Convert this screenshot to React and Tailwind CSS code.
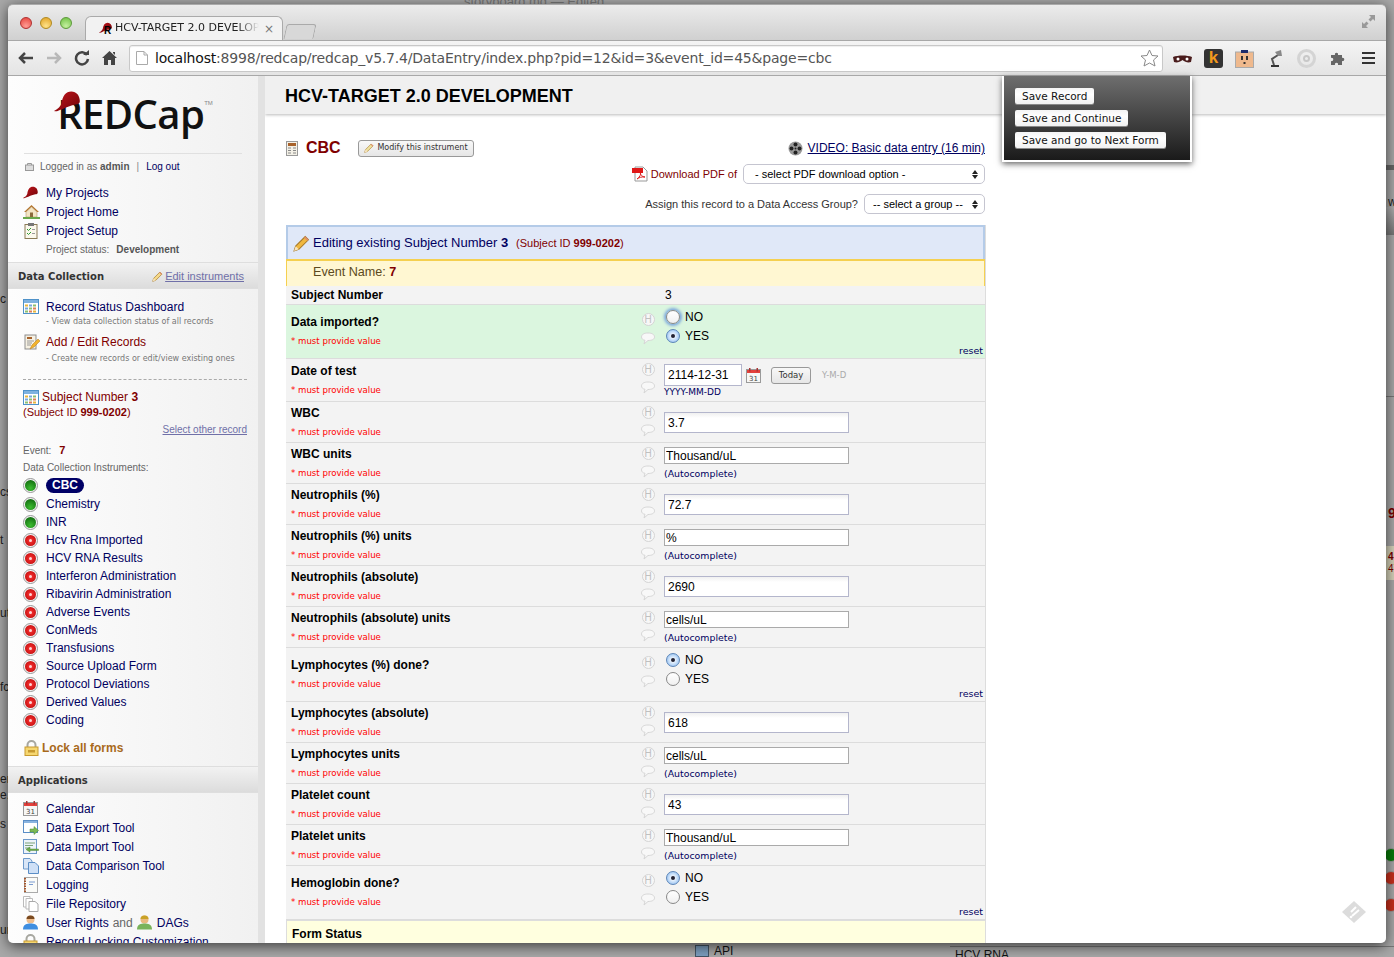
import React from "react";

const arial = "font-['Liberation_Sans',Arial,sans-serif]";
const lucida = "font-['DejaVu_Sans',sans-serif]";

function Cap({ size = 22, className = "" }) {
  return (
    <svg width={size} height={size * 0.8} viewBox="0 0 26 20" className={className}>
      <defs>
        <linearGradient id="capg" x1="0" y1="0" x2="1" y2="1">
          <stop offset="0" stopColor="#c4141c" />
          <stop offset="1" stopColor="#6e0508" />
        </linearGradient>
      </defs>
      <path d="M0 19 C4 17 6 15 7 12 C8 5 11 1 16 1 C21 1 24 5 24 10 C24 12 22 13 20 13 C14 14 9 17 6 18 C4 19 2 20 0 19 Z" fill="url(#capg)" />
    </svg>
  );
}

function HomeI() {
  return (
    <svg width="17" height="15" viewBox="0 0 17 15">
      <path d="M1 8 L8.5 1 L16 8 L14 8 L8.5 3 L3 8Z" fill="#b5762e" />
      <path d="M3 8 L8.5 3 L14 8 V13 H3Z" fill="#f3e5c4" stroke="#a98b5f" strokeWidth=".5" />
      <rect x="7" y="8.5" width="3" height="4.5" fill="#8a6a3a" />
      <rect x="0" y="13" width="17" height="2" fill="#69a84a" />
    </svg>
  );
}
function ClipI() {
  return (
    <svg width="14" height="16" viewBox="0 0 14 16">
      <rect x="1" y="1.5" width="12" height="14" fill="#fbf8ec" stroke="#8b7b56" />
      <rect x="4" y="0" width="6" height="3" fill="#777" />
      <path d="M3 6 l1.5 1.5 L7 5 M3 10 l1.5 1.5 L7 9" stroke="#2c9a32" fill="none" />
      <path d="M8 6.5h3M8 10.5h3" stroke="#999" />
    </svg>
  );
}
function GridI() {
  return (
    <svg width="16" height="15" viewBox="0 0 16 15">
      <rect x=".5" y=".5" width="15" height="14" fill="#fff" stroke="#4f92c9" />
      <rect x="1" y="1" width="14" height="3" fill="#7fb2df" />
      {[2, 6, 10].map((x, i) => [5.5, 8.5, 11.5].map((y, j) => (
        <rect key={x + "-" + y} x={x} y={y} width="3" height="2" fill={["#e8b53c", "#7aa7dc", "#8dc070", "#dd7f5a"][(i + j) % 4]} />
      )))}
    </svg>
  );
}
function NoteI() {
  return (
    <svg width="16" height="16" viewBox="0 0 16 16">
      <rect x="1" y="1" width="11" height="14" fill="#f6f1e3" stroke="#8d8d8d" />
      <rect x="3" y="3" width="5" height="2" fill="#a8622b" />
      <path d="M3 7h7M3 9h5M3 11h4" stroke="#999" />
      <path d="M6 15 L8 11 L14 5 L16 7 L10 13Z" fill="#f2b32c" stroke="#b5781c" strokeWidth=".5" />
    </svg>
  );
}
function Pencil({ size = 12, color = "#f0b840" }) {
  return (
    <svg width={size} height={size} viewBox="0 0 16 16">
      <path d="M1 15 L2.5 10.5 L11.5 1.5 L14.5 4.5 L5.5 13.5Z" fill={color} stroke="#a87a28" strokeWidth="1" />
      <path d="M1 15 L2.5 10.5 L5.5 13.5Z" fill="#f7e4c0" />
      <path d="M11.5 1.5 L14.5 4.5 L13.5 5.5 L10.5 2.5Z" fill="#e08a70" />
    </svg>
  );
}
function Status({ on }) {
  const c = on ? "bg-[radial-gradient(circle_at_50%_75%,#3cbc30,#0a5e0a)]" : "bg-[radial-gradient(circle_at_50%_50%,#f33,#b40808)]";
  return (
    <span className="flex h-[15px] w-[15px] shrink-0 items-center justify-center rounded-full border border-[#999] bg-[#f4f4f4]">
      <span className={`flex h-[11px] w-[11px] items-center justify-center rounded-full ${c}`}>
        {!on && <span className="h-[3px] w-[3px] rounded-full bg-white/80" />}
      </span>
    </span>
  );
}
function LockI() {
  return (
    <svg width="15" height="16" viewBox="0 0 15 16">
      <path d="M3.5 8 V5 a4 4 0 0 1 8 0 V8" fill="none" stroke="#a7a7a0" strokeWidth="2" />
      <rect x="1" y="7" width="13" height="8.5" fill="#f6d770" stroke="#c79a30" />
      <rect x="4" y="10" width="7" height="2.5" fill="#c79a30" />
    </svg>
  );
}
function CalI({ size = 15 }) {
  return (
    <svg width={size} height={size} viewBox="0 0 15 15">
      <rect x=".5" y="1.5" width="14" height="13" fill="#f7f7f5" stroke="#9a9a9a" />
      <rect x="1" y="2" width="13" height="3" fill="#e2413c" />
      <rect x="3" y="0" width="1.5" height="3.5" fill="#a33" />
      <rect x="10.5" y="0" width="1.5" height="3.5" fill="#a33" />
      <text x="7.5" y="12.5" fontSize="7" textAnchor="middle" fill="#444" fontFamily="DejaVu Sans">31</text>
    </svg>
  );
}
function AppIcon({ kind }) {
  if (kind === "cal") return <CalI />;
  if (kind === "export")
    return (
      <svg width="16" height="15" viewBox="0 0 16 15">
        <rect x=".5" y=".5" width="14" height="12" fill="#fff" stroke="#5b8ec6" />
        <rect x="1" y="1" width="13" height="2" fill="#8ab4e0" />
        <path d="M7 9 h4 V6.5 L15.5 10.5 L11 14.5 V12 H7Z" fill="#7cb956" stroke="#4d8a2e" strokeWidth=".5" />
      </svg>
    );
  if (kind === "import")
    return (
      <svg width="16" height="15" viewBox="0 0 16 15">
        <rect x=".5" y=".5" width="13" height="14" fill="#edf3fa" stroke="#6e9acb" />
        <path d="M2 4h10M2 6.5h8M2 9h4" stroke="#7da37a" />
        <path d="M15.5 10 H7 V8 L3 10.5 L7 13 V11.5 H15.5Z" fill="#6fae4c" stroke="#3f7b26" strokeWidth=".4" />
      </svg>
    );
  if (kind === "compare")
    return (
      <svg width="16" height="16" viewBox="0 0 16 16">
        <path d="M.5.5 H7 L9 3 V11 H.5Z" fill="#d9e6f7" stroke="#6e9acb" />
        <path d="M5.5 4.5 H12 L15.5 8 V15.5 H5.5Z" fill="#cfe0f6" stroke="#5b8ec6" />
      </svg>
    );
  if (kind === "log")
    return (
      <svg width="15" height="16" viewBox="0 0 15 16">
        <rect x="1.5" y=".5" width="13" height="15" fill="#fbfbf8" stroke="#aaa" />
        <path d="M2 1v14" stroke="#a4562c" strokeWidth="2" strokeDasharray="1.5 1" />
        <path d="M6 5h6M6 7.5h4" stroke="#7a9bd0" />
      </svg>
    );
  if (kind === "files")
    return (
      <svg width="16" height="16" viewBox="0 0 16 16">
        <path d="M.5.5 H7 V11 H.5Z" fill="#fff" stroke="#bbb" />
        <path d="M3 2.5 H9.5 V13 H3Z" fill="#fff" stroke="#bbb" />
        <path d="M6 5.5 H12 L15 8 V15.5 H6Z" fill="#fff" stroke="#aaa" />
      </svg>
    );
  return <User />;
}
function User({ alt }) {
  return (
    <svg width="15" height="15" viewBox="0 0 15 15">
      <circle cx="7.5" cy="4.5" r="4" fill={alt ? "#e9b97e" : "#efbd8c"} />
      <path d="M3.5 4 A4 3.5 0 0 1 11.5 4Z" fill={alt ? "#c9a227" : "#7a4a20"} />
      <path d="M0 14.5 C0 9 4 8.5 7.5 8.5 C11 8.5 15 9 15 14.5Z" fill={alt ? "#79b35a" : "#3f8ee0"} />
    </svg>
  );
}
function HBubble({ radio }) {
  return (
    <div className={`flex w-[16px] flex-col items-center ${radio ? "pt-[8px]" : "pt-[4px]"}`}>
      <span className={`flex h-[13px] w-[13px] items-center justify-center rounded-full border border-[#d4d4d4] bg-[#f7f7f7] text-[10px] leading-none text-[#c0c0c0] ${arial}`}>H</span>
      <svg width="14" height="13" viewBox="0 0 14 13" className={radio ? "mt-[6px]" : "mt-[5px]"}>
        <path d="M7 1 C11 1 13.5 2.5 13.5 5 C13.5 7.5 10.5 8.5 7 8.5 L3 12 L4 8.3 C2 8 .5 6.8 .5 5 C.5 2.5 3 1 7 1Z" fill="#f8f8f8" stroke="#d6d6d6" />
      </svg>
    </div>
  );
}
function Radio({ checked, focus }) {
  return (
    <span className={`flex h-[14px] w-[14px] items-center justify-center rounded-full border ${checked ? "border-[#5d86b8] bg-[radial-gradient(circle,#ffffff_10%,#a9cdf5_70%,#77a8e3)]" : "border-[#888] bg-[linear-gradient(#fff,#f0f0f0)]"} ${focus ? "border-[#5d8fd0] shadow-[0_0_3px_2px_#7ba6dc]" : ""}`}>
      {checked && <span className="h-[4px] w-[4px] rounded-full bg-[#223]" />}
    </span>
  );
}
function Label({ text, radio, date }) {
  return (
    <div className={`w-[354px] shrink-0 pl-[5px] ${radio ? "pt-[10px]" : date ? "pt-[5px]" : "pt-[4px]"}`}>
      <div className="text-[12px] font-bold leading-[15px] text-black">{text}</div>
      <div className={`mt-[5px] text-[8.6px] leading-[12px] text-[#f00] ${lucida}`}>* must provide value</div>
    </div>
  );
}

function TextRow({ label, value }) {
  return (
    <div className="flex h-[41px] border-b border-[#dcdcdc] bg-[#f3f3f3]">
      <Label text={label} />
      <HBubble />
      <div className="pl-[8px] pt-[10px]">
        <input readOnly value={value} className={`block h-[21px] w-[185px] border border-[#b4b6cc] bg-[linear-gradient(#f0f0f0,#fff_5px)] px-[3px] text-[12px] text-black outline-none ${arial}`} />
      </div>
    </div>
  );
}
function AutoRow({ label, value }) {
  return (
    <div className="flex h-[41px] border-b border-[#dcdcdc] bg-[#f3f3f3]">
      <Label text={label} />
      <HBubble />
      <div className="pl-[8px] pt-[4px]">
        <input readOnly value={value} className={`block h-[17px] w-[185px] border border-[#aaa] bg-white px-[1px] text-[12px] text-black outline-none ${arial}`} />
        <div className={`mt-[4px] text-[9.4px] leading-[12px] text-[#000060] ${lucida}`}>(Autocomplete)</div>
      </div>
    </div>
  );
}
function RadioRow({ label, first, bg = "bg-[#f3f3f3]", focus }) {
  return (
    <div className={`flex h-[54px] border-b border-[#dcdcdc] ${bg}`}>
      <Label text={label} radio />
      <HBubble radio />
      <div className="flex-1 pl-[10px] pt-[2px]">
        <div className="flex h-[19px] items-center gap-[5px] text-[12px] text-black">
          <Radio checked={first} focus={focus} />NO
        </div>
        <div className="flex h-[19px] items-center gap-[5px] text-[12px] text-black">
          <Radio checked={!first} />YES
        </div>
        <div className={`pr-[2px] text-right text-[9.5px] leading-[11px] text-[#000060] ${lucida}`}>reset</div>
      </div>
    </div>
  );
}

function Select({ width, text, pad }) {
  return (
    <div className={`flex h-[20px] ${width} ${pad} items-center justify-between rounded-[5px] border border-[#c5c5d0] bg-white pr-[6px] text-[11px] text-black`}>
      <span>{text}</span>
      <span className="flex flex-col gap-[1px]">
        <span className="h-0 w-0 border-x-[3px] border-b-[4px] border-x-transparent border-b-[#222]" />
        <span className="h-0 w-0 border-x-[3px] border-t-[4px] border-x-transparent border-t-[#222]" />
      </span>
    </div>
  );
}

function SideHeader({ children, right }) {
  return (
    <div className="flex h-[27px] items-center justify-between border-y border-[#dedede] bg-[linear-gradient(#f2f2f2,#dcdcdc)] pl-[10px] pr-[14px] pt-[1px] font-bold text-[#333]">
      <span className={lucida + " text-[10px]"}>{children}</span>
      {right}
    </div>
  );
}

const instruments = [
  ["Chemistry", true], ["INR", true], ["Hcv Rna Imported", false], ["HCV RNA Results", false],
  ["Interferon Administration", false], ["Ribavirin Administration", false], ["Adverse Events", false],
  ["ConMeds", false], ["Transfusions", false], ["Source Upload Form", false], ["Protocol Deviations", false],
  ["Derived Values", false], ["Coding", false],
];
const apps = [
  ["cal", "Calendar"], ["export", "Data Export Tool"], ["import", "Data Import Tool"],
  ["compare", "Data Comparison Tool"], ["log", "Logging"], ["files", "File Repository"],
];

function Sidebar() {
  return (
    <aside className="w-[250px] shrink-0 overflow-hidden bg-[linear-gradient(90deg,#fdfdfd,#f1f1f1)] text-[12px] text-[#000060]">
      <div className="flex h-[77px] items-start justify-center pl-[4px] pt-[11px]">
        <div className="relative flex items-start">
          <Cap size={28} className="absolute -left-[3px] top-[3px] z-10" />
          <span className="text-[40px] font-semibold leading-[54px] tracking-[-0.6px] text-[#111] [font-family:'Open_Sans','Lato',sans-serif]">REDCap</span>
          <span className="mt-[12px] text-[6px] text-[#888]">TM</span>
        </div>
      </div>
      <div className="mx-[16px] border-t border-[#e0e0e0]" />
      <div className="flex h-[25px] items-center pl-[17px] text-[10px] text-[#666]">
        <svg width="9" height="9" viewBox="0 0 9 9" className="mr-[6px]"><rect x=".5" y="3" width="8" height="5.5" fill="#ddd" stroke="#999" /><path d="M2.5 3V1.5h4V3" fill="none" stroke="#999" /></svg>
        <span>Logged in as <b className="text-[#555]">admin</b></span>
        <span className="mx-[7px] text-[#888]">|</span>
        <span className="text-[#000060]">Log out</span>
      </div>
      <div className="pl-[15px] pt-[4px]">
        <div className="flex h-[19px] items-center"><span className="flex w-[23px]"><Cap size={16} /></span>My Projects</div>
        <div className="flex h-[19px] items-center"><span className="flex w-[23px]"><HomeI /></span>Project Home</div>
        <div className="flex h-[19px] items-center"><span className="flex w-[23px] pl-[1px]"><ClipI /></span>Project Setup</div>
        <div className="flex h-[19px] items-center pl-[23px] text-[10px] text-[#666]">Project status:<b className="ml-[7px] text-[#555]">Development</b></div>
      </div>
      <div className="mt-[3px]">
        <SideHeader right={<span className="flex items-center gap-[2px] text-[11px] font-normal text-[#6f6fa8] underline"><Pencil size={11} color="#f5d98a" />Edit instruments</span>}>
          Data Collection
        </SideHeader>
      </div>
      <div className="px-[15px] pt-[9px]">
        <div className="flex h-[17px] items-center"><span className="flex w-[23px]"><GridI /></span>Record Status Dashboard</div>
        <div className={`mt-[1px] h-[12px] whitespace-nowrap pl-[23px] text-[8px] leading-[12px] text-[#777] ${lucida}`}>- View data collection status of all records</div>
        <div className="mt-[5px] flex h-[18px] items-center text-[#800000]"><span className="flex w-[23px] pl-[1px]"><NoteI /></span>Add / Edit Records</div>
        <div className={`mt-[2px] h-[12px] whitespace-nowrap pl-[23px] text-[8px] leading-[12px] text-[#777] ${lucida}`}>- Create new records or edit/view existing ones</div>
        <div className="mr-[-4px] mt-[14px] border-t border-dashed border-[#aaa]" />
        <div className="mt-[9px] flex h-[16px] items-center text-[#800000]">
          <span className="flex w-[19px]"><GridI /></span>Subject Number&nbsp;<b>3</b>
        </div>
        <div className="h-[15px] text-[11px] leading-[15px] text-[#800000]">(Subject ID <b>999-0202</b>)</div>
        <div className="mr-[-4px] mt-[2px] h-[15px] text-right text-[10px] leading-[15px] text-[#7070a8] underline">Select other record</div>
        <div className="mt-[6px] flex h-[14px] items-center text-[10px] text-[#666]">Event:<b className="ml-[8px] text-[11px] text-[#800000]">7</b></div>
        <div className="mt-[4px] h-[14px] text-[10px] leading-[14px] text-[#666]">Data Collection Instruments:</div>
        <div className="mt-[1px] flex h-[18px] items-center">
          <span className="flex w-[23px]"><Status on /></span>
          <span className="flex h-[15px] items-center rounded-full bg-[#000066] px-[6px] text-[12px] font-bold text-white">CBC</span>
        </div>
        <div className="pt-[1px]">
          {instruments.map(([t, on]) => (
            <div key={t} className="flex h-[18px] items-center">
              <span className="flex w-[23px]"><Status on={on} /></span>{t}
            </div>
          ))}
        </div>
        <div className="mt-[10px] flex h-[18px] items-center font-bold text-[#a86a1c]">
          <span className="flex w-[19px] pl-[1px]"><LockI /></span>Lock all forms
        </div>
      </div>
      <div className="mt-[9px]">
        <SideHeader>Applications</SideHeader>
      </div>
      <div className="pl-[15px] pt-[6px]">
        {apps.map(([k, t]) => (
          <div key={t} className="flex h-[19px] items-center"><span className="flex w-[23px]"><AppIcon kind={k} /></span>{t}</div>
        ))}
        <div className="flex h-[19px] items-center">
          <span className="flex w-[23px]"><User /></span>User Rights<span className="mx-[4px] text-[#666]">and</span>
          <span className="mr-[5px] flex"><User alt /></span>DAGs
        </div>
        <div className="flex h-[19px] items-center"><span className="flex w-[23px]"><LockI /></span>Record Locking Customization</div>
      </div>
    </aside>
  );
}

function Main() {
  return (
    <main className="relative min-w-0 flex-1 overflow-hidden bg-white">
      <div className="flex h-[38px] items-center bg-[#f0f0f0] pl-[20px] pt-[2px] shadow-[0_1px_3px_#bbb]">
        <h1 className="text-[18px] font-bold leading-none text-black">HCV-TARGET 2.0 DEVELOPMENT</h1>
      </div>
      <div className="w-[721px] pl-[21px] pt-[25px]">
        <div className="pr-[1px]">
          <div className="flex h-[18px] items-center justify-between">
            <div className="flex items-center">
              <svg width="13" height="15" viewBox="0 0 13 15" className="mr-[7px]">
                <rect x=".5" y=".5" width="11" height="14" fill="#f3f0e6" stroke="#999" />
                <rect x="2" y="2" width="8" height="3" fill="#a8622b" />
                <path d="M2 7h3M7 7h3M2 9.5h3M7 9.5h3M2 12h3M7 12h3" stroke="#888" />
              </svg>
              <span className="w-[52px] text-[16px] font-bold text-[#800000]">CBC</span>
              <span className={`flex h-[17px] w-[116px] items-center justify-center gap-[3px] rounded-[3px] border border-[#999] bg-[linear-gradient(#f8f8f8,#e6e6e6)] text-[8px] text-[#333] ${lucida}`}>
                <Pencil size={10} color="#efe3a0" />Modify this instrument
              </span>
            </div>
            <div className="flex items-center gap-[5px] text-[12px] text-[#000060]">
              <svg width="15" height="15" viewBox="0 0 15 15">
                <circle cx="7.5" cy="7.5" r="7" fill="#9a9a9a" />
                <circle cx="7.5" cy="7.5" r="1" fill="#222" />
                <circle cx="7.5" cy="3.5" r="2" fill="#222" /><circle cx="7.5" cy="11.5" r="2" fill="#222" />
                <circle cx="3.5" cy="7.5" r="2" fill="#222" /><circle cx="11.5" cy="7.5" r="2" fill="#222" />
              </svg>
              <span className="underline">VIDEO: Basic data entry (16 min)</span>
            </div>
          </div>
          <div className="mt-[7px] flex items-center justify-end text-[11px] text-[#800000]">
            <svg width="16" height="16" viewBox="0 0 16 16" className="mr-[3px]">
              <path d="M3 1 H11 L15 5 V15 H3Z" fill="#fff" stroke="#999" />
              <rect x="0" y="2" width="11" height="5" fill="#e01818" />
              <path d="M5 13 C8 11 9 8 8.5 7 C8 8 10 11 13 11 C10 10.5 7 11.5 5 13Z" fill="none" stroke="#d22" />
            </svg>
            Download PDF of
            <div className="ml-[6px]"><Select width="w-[242px]" pad="pl-[11px]" text="- select PDF download option -" /></div>
          </div>
          <div className="mt-[10px] flex items-center justify-end text-[11px] text-[#333]">
            Assign this record to a Data Access Group?
            <div className="ml-[6px]"><Select width="w-[121px]" pad="pl-[8px]" text="-- select a group --" /></div>
          </div>
        </div>
        <div className="mt-[11px] border-r border-[#ddd]">
          <div className="flex h-[34px] items-center border-2 border-b-0 border-[#b4cbe8] bg-[#e0e8f8] pl-[5px] text-[#000060]">
            <Pencil size={17} />
            <span className="ml-[3px] text-[13px]">Editing existing Subject Number <b>3</b></span>
            <span className="ml-[8px] text-[11px] text-[#800000]">(Subject ID <b>999-0202</b>)</span>
          </div>
          <div className="flex h-[27px] items-center border-x border-t-2 border-[#f5d050] bg-[#fff7d2] pb-[2px] pl-[26px] text-[12.6px] text-[#5c4a20]">
            Event Name:&nbsp;<b className="text-[#800000]">7</b>
          </div>
          <div className="flex h-[19px] items-center border-b border-[#dcdcdc] bg-[#f3f3f3] text-[12px]">
            <span className="w-[379px] pl-[5px] font-bold text-black">Subject Number</span><span>3</span>
          </div>
          <RadioRow label="Data imported?" first={false} bg="bg-[#dbf6df]" focus />
          <div className="flex h-[43px] border-b border-[#dcdcdc] bg-[#f3f3f3]">
            <Label text="Date of test" date />
            <HBubble />
            <div className="pl-[8px] pt-[5px]">
              <div className="flex items-center">
                <input readOnly value="2114-12-31" className={`block h-[22px] w-[78px] border border-[#b4b6cc] bg-white px-[3px] text-[12px] text-black outline-none ${arial}`} />
                <span className="ml-[4px] flex"><CalI size={15} /></span>
                <span className={`ml-[10px] flex h-[17px] w-[40px] items-center justify-center rounded-[3px] border border-[#999] bg-[linear-gradient(#f8f8f8,#e6e6e6)] text-[8.5px] text-[#333] ${lucida}`}>Today</span>
                <span className={`ml-[11px] text-[8.5px] text-[#aaa] ${lucida}`}>Y-M-D</span>
              </div>
              <div className={`text-[9px] leading-[12px] text-[#000060] ${lucida}`}>YYYY-MM-DD</div>
            </div>
          </div>
          <TextRow label="WBC" value="3.7" />
          <AutoRow label="WBC units" value="Thousand/uL" />
          <TextRow label="Neutrophils (%)" value="72.7" />
          <AutoRow label="Neutrophils (%) units" value="%" />
          <TextRow label="Neutrophils (absolute)" value="2690" />
          <AutoRow label="Neutrophils (absolute) units" value="cells/uL" />
          <RadioRow label="Lymphocytes (%) done?" first />
          <TextRow label="Lymphocytes (absolute)" value="618" />
          <AutoRow label="Lymphocytes units" value="cells/uL" />
          <TextRow label="Platelet count" value="43" />
          <AutoRow label="Platelet units" value="Thousand/uL" />
          <RadioRow label="Hemoglobin done?" first />
          <div className="h-[26px] border-l border-t border-[#ddd] bg-[#ffffdf] pl-[5px] pt-[6px] text-[12px] font-bold leading-[15px] text-black">Form Status</div>
        </div>
      </div>
      <svg width="24" height="22" viewBox="0 0 24 22" className="absolute bottom-[20px] right-[20px]">
        <path d="M12 0 L24 11 L12 22 L0 11Z" fill="#dcdcdc" />
        <path d="M9 11 L14 6 M10 15 L17 9" stroke="#fff" strokeWidth="2" />
        <circle cx="9" cy="16" r="1.3" fill="#fff" />
      </svg>
    </main>
  );
}

function ToolIcon({ children }) {
  return <span className="flex h-[20px] w-[31px] items-center justify-center">{children}</span>;
}

function Chrome() {
  return (
    <div className="shrink-0">
      <div className="flex h-[36px] items-end justify-between rounded-t-[5px] border-t border-[#aaa] bg-[linear-gradient(#ececec,#d0d0d0)]">
        <div className="flex h-full items-end">
          <div className="flex h-full items-center gap-[8px] self-start pl-[12px]">
            <span className="h-[12px] w-[12px] rounded-full border border-[#b03030] bg-[radial-gradient(circle_at_50%_80%,#ff9d95,#e5413a)]" />
            <span className="h-[12px] w-[12px] rounded-full border border-[#b08a20] bg-[radial-gradient(circle_at_50%_80%,#ffe38a,#e0a020)]" />
            <span className="h-[12px] w-[12px] rounded-full border border-[#5d9a3a] bg-[radial-gradient(circle_at_50%_80%,#c5f0a0,#6cc040)]" />
          </div>
          <div className={`ml-[13px] flex h-[24px] w-[198px] items-center overflow-hidden rounded-t-[6px] border border-b-0 border-[#aaa] bg-[#f2f2f2] pl-[13px] pr-[8px] text-[11px] text-[#222] ${lucida}`}>
            <span className="relative flex h-[14px] w-[16px] shrink-0 items-start">
              <Cap size={14} />
              <span className={`absolute left-[5px] top-[4px] z-10 text-[10px] font-bold leading-[10px] text-black ${arial}`}>R</span>
            </span>
            <span className="flex-1 overflow-hidden whitespace-nowrap [mask-image:linear-gradient(90deg,#000_85%,transparent)]">HCV-TARGET 2.0 DEVELOPMENT</span>
            <span className="ml-[5px] text-[12px] text-[#777]">×</span>
          </div>
          <div className="mb-[1px] ml-[2px] h-[15px] w-[30px] -skew-x-12 rounded-t-[3px] border border-b-0 border-[#aaa] bg-[#d8d8d8]" />
        </div>
        <svg width="15" height="15" viewBox="0 0 15 15" className="mb-[11px] mr-[10px]" fill="#999">
          <path d="M8 1 H14 V7 L12 5 L9.5 7.5 L7.5 5.5 L10 3Z M1 14 V8 L3 10 L5.5 7.5 L7.5 9.5 L5 12 L7 14Z" />
        </svg>
      </div>
      <div className="flex h-[36px] items-center border-y border-[#a8a8a8] bg-[linear-gradient(#f4f4f4,#e4e4e4)] pl-[9px]">
        <div className="flex w-[112px] shrink-0 items-center text-[#444]">
          <svg width="17" height="14" viewBox="0 0 17 14" className="mr-[12px]"><path d="M16 7H4M8 2 L3 7 L8 12" fill="none" stroke="#444" strokeWidth="2.5" /></svg>
          <svg width="17" height="14" viewBox="0 0 17 14" className="mr-[11px]"><path d="M1 7H13M9 2 L14 7 L9 12" fill="none" stroke="#b8b8b8" strokeWidth="2.5" /></svg>
          <svg width="16" height="16" viewBox="0 0 16 16" className="mr-[12px]"><path d="M13 5 A6 6 0 1 0 14 9" fill="none" stroke="#444" strokeWidth="2.5" /><path d="M9 5 H15 V0Z" fill="#444" /></svg>
          <svg width="15" height="14" viewBox="0 0 15 14"><path d="M7.5 0 L15 7 H13 V14 H9 V9 H6 V14 H2 V7 H0Z M11 1 H13 V4 L11 2Z" fill="#444" /></svg>
        </div>
        <div className={`flex h-[27px] w-[1034px] shrink-0 items-center rounded-[3px] border border-[#c8c8c8] bg-white pl-[6px] pr-[3px] text-[14px] tracking-[-0.2px] text-[#555] shadow-[inset_0_1px_1px_#eee] ${lucida}`}>
          <svg width="12" height="14" viewBox="0 0 12 14" className="mr-[7px] shrink-0"><path d="M.5.5 H8 L11.5 4 V13.5 H.5Z" fill="#fff" stroke="#aaa" /><path d="M8 .5 V4 H11.5" fill="none" stroke="#aaa" /></svg>
          <span className="text-[#111]">localhost</span>:8998/redcap/redcap_v5.7.4/DataEntry/index.php?pid=12&amp;id=3&amp;event_id=45&amp;page=cbc
          <svg width="19" height="18" viewBox="0 0 19 18" className="ml-auto shrink-0"><path d="M9.5 1 L12 6.5 L18 7 L13.5 11 L15 17 L9.5 14 L4 17 L5.5 11 L1 7 L7 6.5Z" fill="#fff" stroke="#888" /></svg>
        </div>
        <div className="ml-[4px] flex items-center">
          <ToolIcon>
            <svg width="19" height="15" viewBox="0 0 19 15"><path d="M6 1h7l3 3v10H3V4Z" fill="#eee" /><path d="M0 6 C5 4 14 4 19 6 L18 11 C15 12 12 11 9.5 9 C7 11 4 12 1 11Z" fill="#4a1c1c" /><circle cx="5" cy="8" r="1.5" fill="#fff" /><circle cx="14" cy="8" r="1.5" fill="#fff" /></svg>
          </ToolIcon>
          <ToolIcon><span className={`flex h-[19px] w-[19px] items-center justify-center rounded-[3px] bg-[#333] text-[17px] font-bold text-[#f29a1d] ${arial}`}>k</span></ToolIcon>
          <ToolIcon>
            <svg width="19" height="19" viewBox="0 0 19 19"><rect x=".5" y="3" width="18" height="15.5" fill="#efb98d" stroke="#aaa" /><rect x="6" y="1" width="7" height="3" fill="#1b2b6b" /><rect x="6" y="7" width="2" height="4" fill="#333" /><rect x="11" y="7" width="2" height="4" fill="#333" /><rect x="8.5" y="13" width="2" height="2" fill="#333" /></svg>
          </ToolIcon>
          <ToolIcon>
            <svg width="14" height="19" viewBox="0 0 14 19"><path d="M2 18 H10 V16 H2Z" fill="#333" /><path d="M5 16 L3 10 L9 6" fill="none" stroke="#555" strokeWidth="2" /><path d="M6 3 L12 1 L13 7 L9 7Z" fill="#888" /></svg>
          </ToolIcon>
          <ToolIcon><span className="flex h-[19px] w-[19px] items-center justify-center rounded-full border-[3px] border-[#d4d4d4]"><span className="h-[7px] w-[7px] rounded-full border-2 border-[#c8c8c8]" /></span></ToolIcon>
          <ToolIcon>
            <svg width="15" height="15" viewBox="0 0 15 15"><path d="M1 4 H5 C4 1 9 1 8 4 H12 V7 C15 6 15 11 12 10 V14 H8 C9 11 4 11 5 14 H1 V10 C4 11 4 6 1 7Z" fill="#666" /></svg>
          </ToolIcon>
          <span className="ml-[9px] flex w-[13px] flex-col gap-[2.5px]">
            <span className="h-[2.5px] bg-[#333]" /><span className="h-[2.5px] bg-[#333]" /><span className="h-[2.5px] bg-[#333]" />
          </span>
        </div>
      </div>
    </div>
  );
}

function SaveBox() {
  const Btn = ({ children }) => (
    <span className={`block w-fit rounded-[2px] bg-[linear-gradient(#f4f4f4,#fff_40%,#f0f0f0)] px-[7px] text-[10.5px] leading-[16px] text-[#111] shadow-[0_1px_0_#888] ${lucida}`}>{children}</span>
  );
  return (
    <div className="absolute left-[994px] top-0 z-20 flex h-[86px] w-[190px] flex-col gap-[6px] border-x-2 border-b-2 border-white bg-[linear-gradient(#6e6e6e,#1a1a1a)] pl-[11px] pt-[12px] shadow-[0_2px_6px_#666]">
      <Btn>Save Record</Btn>
      <Btn>Save and Continue</Btn>
      <Btn>Save and go to Next Form</Btn>
    </div>
  );
}

const leftPeek = [
  ["c", "top-[290px]"], ["cs", "top-[483px]"], ["t", "top-[531px]"], ["ut", "top-[604px]"],
  ["fc", "top-[678px]"], ["er", "top-[770px]"], ["e.", "top-[786px]"], ["s", "top-[815px]"], ["ur", "top-[921px]"],
];

function Backdrop() {
  return (
    <>
      <div className="absolute left-[464px] top-[-8px] text-[13px] text-[#777]">storyboard.md — Edited</div>
      {leftPeek.map(([t, c]) => (
        <div key={t} className={`absolute left-0 text-[12px] text-[#222] ${c}`}>{t}</div>
      ))}
      <div className="absolute left-[1386px] top-[165px] h-[5px] w-[8px] bg-[#666]" />
      <div className="absolute left-[1388px] top-[193px] text-[12px] text-[#222]">w</div>
      <div className="absolute left-[1386px] top-[207px] h-[28px] w-[8px] bg-[linear-gradient(#b0b0b0,#777)]" />
      <div className="absolute left-[1386px] top-[396px] h-0 w-[8px] border-t border-[#777]" />
      <div className="absolute left-[1386px] top-[546px] flex h-[34px] w-[8px] flex-col justify-center overflow-hidden bg-[#d6d3ba] pl-[2px] text-[10px] font-bold leading-[12px] text-[#700]">4<span className="font-normal">47</span></div>
      <div className="absolute left-[1388px] top-[503px] text-[14px] font-bold text-[#700]">99</div>
      <div className="absolute left-[1384px] top-[848px] h-[14px] w-[14px] rounded-full border border-[#999] bg-[#0a7a0a]" />
      <div className="absolute left-[1384px] top-[871px] h-[14px] w-[14px] rounded-full border border-[#999] bg-[#c9301c]" />
      <div className="absolute left-[1384px] top-[898px] h-[14px] w-[14px] rounded-full border border-[#999] bg-[#c9301c]" />
      <div className="absolute bottom-[-1px] left-[695px] flex h-[14px] items-center gap-[5px] text-[12px] text-[#111]">
        <span className="h-[12px] w-[14px] border border-[#456] bg-[#7d9fc0]" />API
      </div>
      <div className="absolute bottom-[-7px] left-[955px] text-[12px] text-[#111]">HCV RNA</div>
      <div className="absolute bottom-[10px] left-[950px] h-0 w-[444px] border-t border-[#777]" />
    </>
  );
}

export default function App() {
  return (
    <div className={`relative h-[957px] w-[1394px] overflow-hidden bg-[#a8a8a8] ${arial}`}>
      <Backdrop />
      <div className="absolute left-[8px] top-[4px] flex h-[939px] w-[1378px] flex-col overflow-hidden rounded-[5px] shadow-[0_3px_14px_rgba(0,0,0,0.65)]">
        <Chrome />
        <div className="relative flex min-h-0 flex-1">
          <Sidebar />
          <div className="w-[7px] shrink-0 bg-[#e2e2e2]" />
          <Main />
          <SaveBox />
        </div>
      </div>
    </div>
  );
}
